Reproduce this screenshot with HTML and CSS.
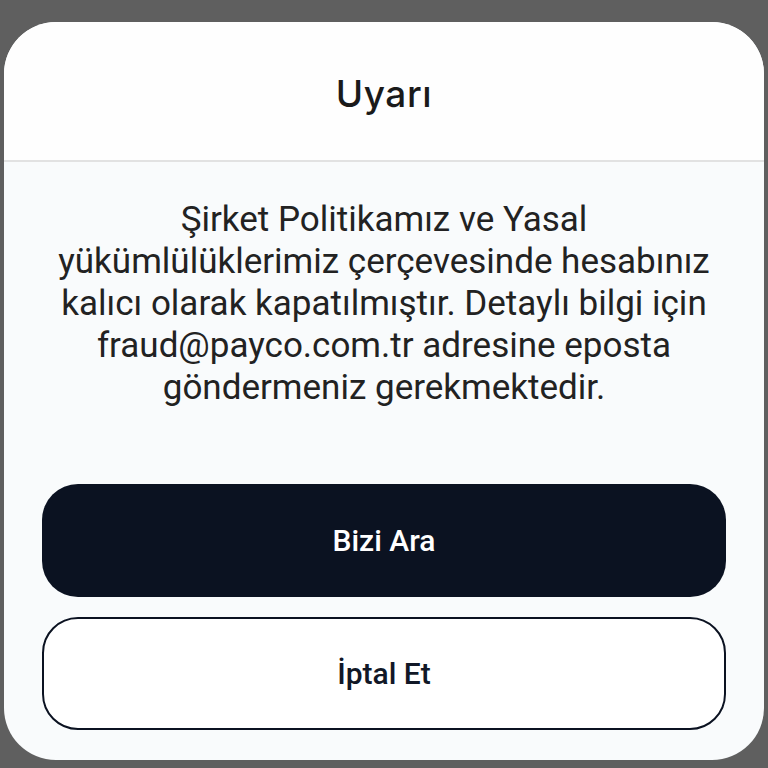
FILE: index.html
```html
<!DOCTYPE html>
<html lang="tr">
<head>
<meta charset="utf-8">
<link rel="stylesheet" href="styles.css">
</head>
<body>
<div class="backdrop">
  <div class="sheet">
    <div class="sheet-header">
      <h1 class="title">Uyarı</h1>
    </div>
    <div class="sheet-body">
      <p class="message">Şirket Politikamız ve Yasal<br>yükümlülüklerimiz çerçevesinde hesabınız<br>kalıcı olarak kapatılmıştır. Detaylı bilgi için<br>fraud@payco.com.tr adresine eposta<br>göndermeniz gerekmektedir.</p>
      <div class="actions">
        <button class="btn btn-primary">Bizi Ara</button>
        <button class="btn btn-outline">İptal Et</button>
      </div>
    </div>
  </div>
</div>
</body>
</html>
```
FILE: styles.css
```css
html, body {
  margin: 0;
  padding: 0;
  width: 768px;
  height: 768px;
  overflow: hidden;
  background: #5f5f5f;
}

.backdrop {
  padding: 22px 4px 8px 4px;
  height: 738px;
}

.sheet {
  height: 738px;
  background: #f9fbfc;
  border-radius: 52px;
  overflow: hidden;
  display: flex;
  flex-direction: column;
}

.sheet-header {
  height: 140px;
  background: #fefefe;
  border-bottom: 2px solid #e2e2e2;
  display: flex;
  align-items: center;
  justify-content: center;
  box-sizing: border-box;
}

.title {
  margin: 0;
  padding-top: 5px;
  font-family: "Inter", "Liberation Sans", sans-serif;
  font-weight: 500;
  font-size: 37px;
  letter-spacing: 0.6px;
  color: #1a1a1a;
}

.sheet-body {
  padding: 37px 38px 0 38px;
  display: flex;
  flex-direction: column;
}

.message {
  margin: 0;
  text-align: center;
  font-family: "Roboto", "Liberation Sans", sans-serif;
  font-size: 35px;
  line-height: 42px;
  color: #222222;
}

.actions {
  margin-top: 75px;
  display: flex;
  flex-direction: column;
  gap: 20px;
}

.btn {
  height: 113px;
  border-radius: 36px;
  font-family: "Roboto", "Liberation Sans", sans-serif;
  font-weight: 500;
  font-size: 30px;
  cursor: pointer;
  box-sizing: border-box;
}

.btn-primary {
  background: #0b1221;
  color: #ffffff;
  border: none;
}

.btn-outline {
  background: #ffffff;
  color: #111827;
  border: 2.5px solid #0b1221;
}
```
